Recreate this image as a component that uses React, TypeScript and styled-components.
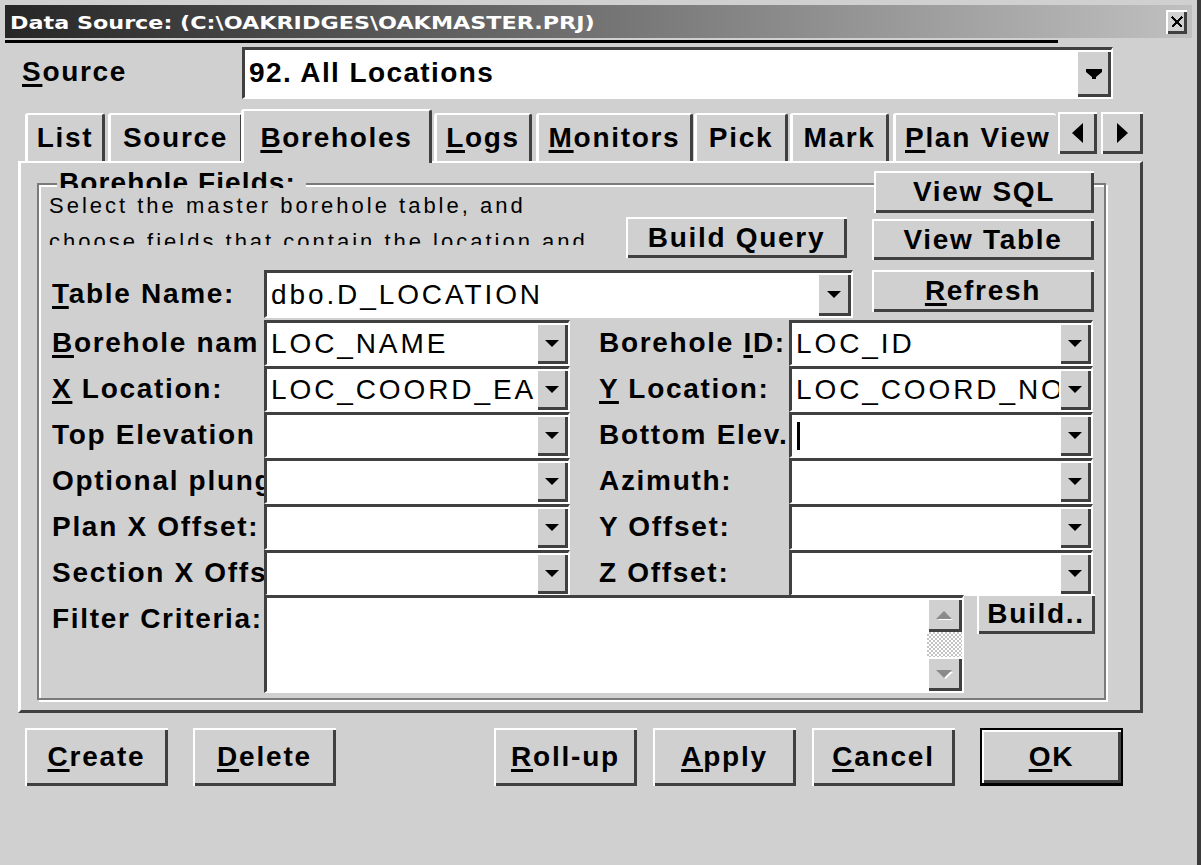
import React from "react";
import styled, { createGlobalStyle, css } from "styled-components";

const FACE = "#d0d0d0";
const DARK = "#404040";
const ETCH = "#7a7a7a";
const SANS = `"Liberation Sans", Arial, Helvetica, sans-serif`;

const GlobalStyle = createGlobalStyle`
  * { box-sizing: border-box; }
  html, body { margin: 0; padding: 0; background: ${FACE}; }
  body { font-family: ${SANS}; }
`;

const raised = css`
  background: ${FACE};
  box-shadow: inset 2px 2px 0 #fff, inset -3px -3px 0 ${DARK};
`;

const sunken = css`
  background: #fff;
  border-style: solid;
  border-width: 3px 2px 2px 3px;
  border-color: ${DARK} #fff #fff ${DARK};
`;

const Window = styled.div`
  width: 1201px;
  height: 865px;
  overflow: hidden;
  background: ${FACE};
  border-right: 4px solid #3a3a3a;
  padding-top: 5px;
  display: flex;
  flex-direction: column;
  font-family: ${SANS};
  font-size: 28px;
  font-weight: 700;
  letter-spacing: 1.7px;
  color: #000;
`;

const TitleBar = styled.div`
  margin-left: 5px;
  width: 1187px;
  height: 33px;
  flex: none;
  display: flex;
  align-items: center;
  padding: 0 5px;
  background: linear-gradient(to right, #262626, #c0c0c0);
`;

const TitleText = styled.span`
  display: inline-block;
  margin-top: 3px;
  font-family: "DejaVu Sans", Verdana, sans-serif;
  font-size: 17px;
  font-weight: 700;
  letter-spacing: 0;
  color: #fff;
  white-space: nowrap;
  transform: scaleX(1.31);
  transform-origin: left center;
`;

const CloseBox = styled.div`
  margin-left: auto;
  width: 21px;
  height: 24px;
  ${raised};
  display: flex;
  align-items: center;
  justify-content: center;
`;

const MenuLine = styled.div`
  margin: 2px 0 0 5px;
  width: 1053px;
  height: 3px;
  flex: none;
  background: #000;
`;

const SourceRow = styled.div`
  margin-top: 4px;
  height: 52px;
  flex: none;
  display: flex;
  align-items: center;
`;

const SourceLabel = styled.div`
  margin-left: 22px;
  width: 220px;
  padding-bottom: 2px;
`;

const U = styled.span`
  text-decoration: underline;
  text-decoration-thickness: 3px;
  text-underline-offset: 3px;
`;

const Combo = styled.div<{ $w: number; $h: number; $mt?: number }>`
  width: ${(p) => p.$w}px;
  height: ${(p) => p.$h}px;
  margin-top: ${(p) => p.$mt ?? 0}px;
  flex: none;
  display: flex;
  ${sunken};
`;

const ComboText = styled.div<{ $bold?: boolean; $pb?: number }>`
  flex: 1;
  min-width: 0;
  display: flex;
  align-items: center;
  padding: 0 0 ${(p) => p.$pb ?? 0}px 4px;
  overflow: hidden;
  white-space: nowrap;
  font-weight: ${(p) => (p.$bold ? 700 : 400)};
  letter-spacing: ${(p) => (p.$bold ? 1.4 : 2.9)}px;
`;

const Caret = styled.span`
  display: inline-block;
  width: 3px;
  height: 28px;
  margin-left: 1px;
  background: #000;
`;

const DropBtn = styled.div<{ $w: number }>`
  width: ${(p) => p.$w}px;
  flex: none;
  ${raised};
  display: flex;
  align-items: center;
  justify-content: center;
`;

const TabRow = styled.div`
  margin-top: 10px;
  height: 52px;
  flex: none;
  padding-left: 25px;
  display: flex;
  align-items: flex-end;
`;

const Tab = styled.div<{ $w: number; $ml: number; $active?: boolean; $cut?: boolean }>`
  position: relative;
  z-index: ${(p) => (p.$active ? 2 : 1)};
  flex: none;
  width: ${(p) => p.$w}px;
  height: ${(p) => (p.$active ? 54 : 48)}px;
  margin-left: ${(p) => p.$ml}px;
  margin-bottom: ${(p) => (p.$active ? -2 : 0)}px;
  background: ${FACE};
  border-top: 2px solid #fff;
  border-left: 3px solid #fff;
  border-right: ${(p) => (p.$cut ? "none" : `3px solid ${DARK}`)};
  border-radius: 3px 3px 0 0;
  padding-top: ${(p) => (p.$active ? 11 : 7)}px;
  padding-left: ${(p) => (p.$cut ? 9 : 0)}px;
  line-height: 32px;
  text-align: ${(p) => (p.$cut ? "left" : "center")};
  white-space: nowrap;
  overflow: hidden;
`;

const TabScroll = styled.div<{ $ml: number; $w: number }>`
  flex: none;
  width: ${(p) => p.$w}px;
  height: 42px;
  margin-left: ${(p) => p.$ml}px;
  margin-bottom: 7px;
  ${raised};
  display: flex;
  align-items: center;
  justify-content: center;
`;

const Panel = styled.div`
  margin-left: 18px;
  width: 1125px;
  height: 552px;
  flex: none;
  border-top: 2px solid #fff;
  border-left: 3px solid #fff;
  border-right: 3px solid ${DARK};
  border-bottom: 3px solid ${DARK};
`;

const GroupBox = styled.div`
  position: relative;
  margin: 20px 0 0 16px;
  width: 1069px;
  height: 517px;
  border: 2px solid ${ETCH};
  box-shadow: inset 2px 2px 0 #fff, 2px 2px 0 #fff;
  display: flex;
  flex-direction: column;
`;

const Legend = styled.div`
  position: absolute;
  top: -16px;
  left: 18px;
  height: 19px;
  overflow: hidden;
  background: ${FACE};
  padding: 0 10px 0 2px;
  line-height: 28px;
  letter-spacing: 1.1px;
  white-space: nowrap;
`;

const TopSection = styled.div`
  height: 83px;
  flex: none;
  display: flex;
  align-items: flex-start;
`;

const Description = styled.div`
  margin: 3px 0 0 10px;
  width: 577px;
  height: 57px;
  padding-right: 17px;
  overflow: hidden;
  font-size: 22px;
  font-weight: 400;
  letter-spacing: 3px;
  line-height: 36px;
`;

const Btn = styled.div<{ $w: number; $h: number; $ml?: number; $mt?: number; $def?: boolean }>`
  flex: none;
  width: ${(p) => p.$w}px;
  height: ${(p) => p.$h}px;
  margin-left: ${(p) => p.$ml ?? 0}px;
  margin-top: ${(p) => p.$mt ?? 0}px;
  ${raised};
  display: flex;
  align-items: center;
  justify-content: center;
  white-space: nowrap;
  ${(p) =>
    p.$def &&
    css`
      border: 2px solid #000;
      border-bottom-width: 3px;
    `}
`;

const ButtonStack = styled.div`
  margin: -14px 0 0 25px;
  display: flex;
  flex-direction: column;
  align-items: flex-end;
  gap: 6px;
`;

const TableRow = styled.div`
  height: 52px;
  flex: none;
  display: flex;
  align-items: flex-start;
  padding-left: 13px;
`;

const RowLabel = styled.div<{ $h: number; $mt?: number }>`
  flex: none;
  width: 212px;
  height: ${(p) => p.$h}px;
  margin-top: ${(p) => p.$mt ?? 0}px;
  display: flex;
  align-items: center;
  overflow: hidden;
  white-space: nowrap;
`;

const FieldsGrid = styled.div`
  flex: none;
  display: grid;
  grid-template-columns: 212px 306px 219px 304px;
  grid-auto-rows: 46px;
  padding-left: 13px;
`;

const GridLabel = styled.div<{ $right?: boolean }>`
  display: flex;
  align-items: center;
  padding-left: ${(p) => (p.$right ? 29 : 0)}px;
  overflow: hidden;
  white-space: nowrap;
`;

const FilterRow = styled.div`
  flex: none;
  display: flex;
  align-items: flex-start;
  padding-left: 13px;
`;

const TextArea = styled.div`
  flex: none;
  width: 700px;
  height: 98px;
  margin-top: -1px;
  display: flex;
  justify-content: flex-end;
  ${sunken};
`;

const VScroll = styled.div`
  width: 35px;
  display: flex;
  flex-direction: column;
`;

const ScrollArrow = styled.div`
  height: 34px;
  flex: none;
  ${raised};
  display: flex;
  align-items: center;
  justify-content: center;
`;

const ScrollTrack = styled.div`
  flex: 1;
  background-color: #fff;
  background-image: repeating-conic-gradient(#c4c4c4 0% 25%, #ffffff 0% 50%);
  background-size: 4px 4px;
`;

const ButtonRow = styled.div`
  margin-top: 15px;
  padding-left: 25px;
  flex: none;
  display: flex;
  letter-spacing: 1.8px;
`;

const SmallArrow = () => (
  <svg width="14" height="7" viewBox="0 0 14 7">
    <polygon points="0,0 14,0 7,7" fill="#000" />
  </svg>
);

const BigArrow = () => (
  <svg width="16" height="10" viewBox="0 0 16 10">
    <polygon points="0,0 16,0 16,3 10,8 10,10 6,10 6,8 0,3" fill="#000" />
  </svg>
);

const GrayArrow = ({ up }: { up?: boolean }) => (
  <svg width="17" height="9" viewBox="0 0 17 9">
    {up ? (
      <>
        <polygon points="1,8 16,8 8.5,1" fill="#fff" transform="translate(1,1)" />
        <polygon points="0,8 16,8 8,0" fill="#8a8a8a" />
      </>
    ) : (
      <>
        <polygon points="1,1 16,1 8.5,8" fill="#fff" transform="translate(1,1)" />
        <polygon points="0,0 16,0 8,8" fill="#8a8a8a" />
      </>
    )}
  </svg>
);

const SideArrow = ({ left }: { left?: boolean }) => (
  <svg width="11" height="20" viewBox="0 0 11 20">
    <polygon points={left ? "11,0 11,20 0,10" : "0,0 0,20 11,10"} fill="#000" />
  </svg>
);

const CloseGlyph = () => (
  <svg width="12" height="12" viewBox="0 0 12 12" shapeRendering="crispEdges">
    <path d="M1 1 L11 11 M11 1 L1 11" stroke="#000" strokeWidth="2" />
  </svg>
);

type Cell = { label: React.ReactNode; value?: React.ReactNode };

const rows: [Cell, Cell][] = [
  [
    { label: <><U>B</U>orehole nam</>, value: "LOC_NAME" },
    { label: <>Borehole <U>I</U>D:</>, value: "LOC_ID" },
  ],
  [
    { label: <><U>X</U> Location:</>, value: "LOC_COORD_EA" },
    { label: <><U>Y</U> Location:</>, value: "LOC_COORD_NO" },
  ],
  [
    { label: "Top Elevation" },
    { label: "Bottom Elev.", value: <Caret /> },
  ],
  [{ label: "Optional plung" }, { label: "Azimuth:" }],
  [{ label: "Plan X Offset:" }, { label: "Y Offset:" }],
  [{ label: "Section X Offs" }, { label: "Z Offset:" }],
];

const tabs = [
  { label: <>List</>, w: 80, ml: 0 },
  { label: <>Source</>, w: 135, ml: 3 },
  { label: <><U>B</U>oreholes</>, w: 191, ml: -2, active: true },
  { label: <><U>L</U>ogs</>, w: 98, ml: 2 },
  { label: <><U>M</U>onitors</>, w: 157, ml: 4 },
  { label: <>Pick</>, w: 94, ml: 1 },
  { label: <>Mark</>, w: 99, ml: 2 },
  { label: <><U>P</U>lan View</>, w: 163, ml: 4, cut: true },
];

const bottomButtons = [
  { label: <><U>C</U>reate</>, ml: 0 },
  { label: <><U>D</U>elete</>, ml: 25 },
  { label: <><U>R</U>oll-up</>, ml: 158 },
  { label: <><U>A</U>pply</>, ml: 16 },
  { label: <><U>C</U>ancel</>, ml: 16 },
  { label: <><U>O</U>K</>, ml: 25, def: true },
];

function SmallCombo({ w, value }: { w: number; value?: React.ReactNode }) {
  return (
    <Combo $w={w} $h={46}>
      <ComboText>{value}</ComboText>
      <DropBtn $w={32}>
        <SmallArrow />
      </DropBtn>
    </Combo>
  );
}

export default function App() {
  return (
    <>
      <GlobalStyle />
      <Window>
        <TitleBar>
          <TitleText>Data Source: (C:\OAKRIDGES\OAKMASTER.PRJ)</TitleText>
          <CloseBox>
            <CloseGlyph />
          </CloseBox>
        </TitleBar>
        <MenuLine />

        <SourceRow>
          <SourceLabel>
            <U>S</U>ource
          </SourceLabel>
          <Combo $w={871} $h={52}>
            <ComboText $bold $pb={2}>92. All Locations</ComboText>
            <DropBtn $w={35}>
              <BigArrow />
            </DropBtn>
          </Combo>
        </SourceRow>

        <TabRow>
          {tabs.map((t, i) => (
            <Tab key={i} $w={t.w} $ml={t.ml} $active={t.active} $cut={t.cut}>
              {t.label}
            </Tab>
          ))}
          <TabScroll $ml={2} $w={39}>
            <SideArrow left />
          </TabScroll>
          <TabScroll $ml={4} $w={42}>
            <SideArrow />
          </TabScroll>
        </TabRow>

        <Panel>
          <GroupBox>
            <Legend>Borehole Fields:</Legend>
            <TopSection>
              <Description>
                Select the master borehole table, and choose fields that contain the location and
              </Description>
              <Btn $w={221} $h={41} $mt={32}>
                Build Query
              </Btn>
              <ButtonStack>
                <Btn $w={220} $h={42}>
                  View SQL
                </Btn>
                <Btn $w={222} $h={41}>
                  View Table
                </Btn>
              </ButtonStack>
            </TopSection>

            <TableRow>
              <RowLabel $h={48} $mt={2}>
                <span>
                  <U>T</U>able Name:
                </span>
              </RowLabel>
              <Combo $w={589} $h={48} $mt={2}>
                <ComboText>dbo.D_LOCATION</ComboText>
                <DropBtn $w={34}>
                  <SmallArrow />
                </DropBtn>
              </Combo>
              <Btn $w={222} $h={42} $ml={19} $mt={2}>
                <span>
                  <U>R</U>efresh
                </span>
              </Btn>
            </TableRow>

            <FieldsGrid>
              {rows.map(([l, r], i) => (
                <React.Fragment key={i}>
                  <GridLabel>
                    <span>{l.label}</span>
                  </GridLabel>
                  <SmallCombo w={306} value={l.value} />
                  <GridLabel $right>
                    <span>{r.label}</span>
                  </GridLabel>
                  <SmallCombo w={304} value={r.value} />
                </React.Fragment>
              ))}
            </FieldsGrid>

            <FilterRow>
              <RowLabel $h={46}>Filter Criteria:</RowLabel>
              <TextArea>
                <VScroll>
                  <ScrollArrow>
                    <GrayArrow up />
                  </ScrollArrow>
                  <ScrollTrack />
                  <ScrollArrow>
                    <GrayArrow />
                  </ScrollArrow>
                </VScroll>
              </TextArea>
              <Btn $w={118} $h={40} $ml={13} $mt={-2}>
                Build..
              </Btn>
            </FilterRow>
          </GroupBox>
        </Panel>

        <ButtonRow>
          {bottomButtons.map((b, i) => (
            <Btn key={i} $w={143} $h={58} $ml={b.ml} $def={b.def}>
              <span>{b.label}</span>
            </Btn>
          ))}
        </ButtonRow>
      </Window>
    </>
  );
}
